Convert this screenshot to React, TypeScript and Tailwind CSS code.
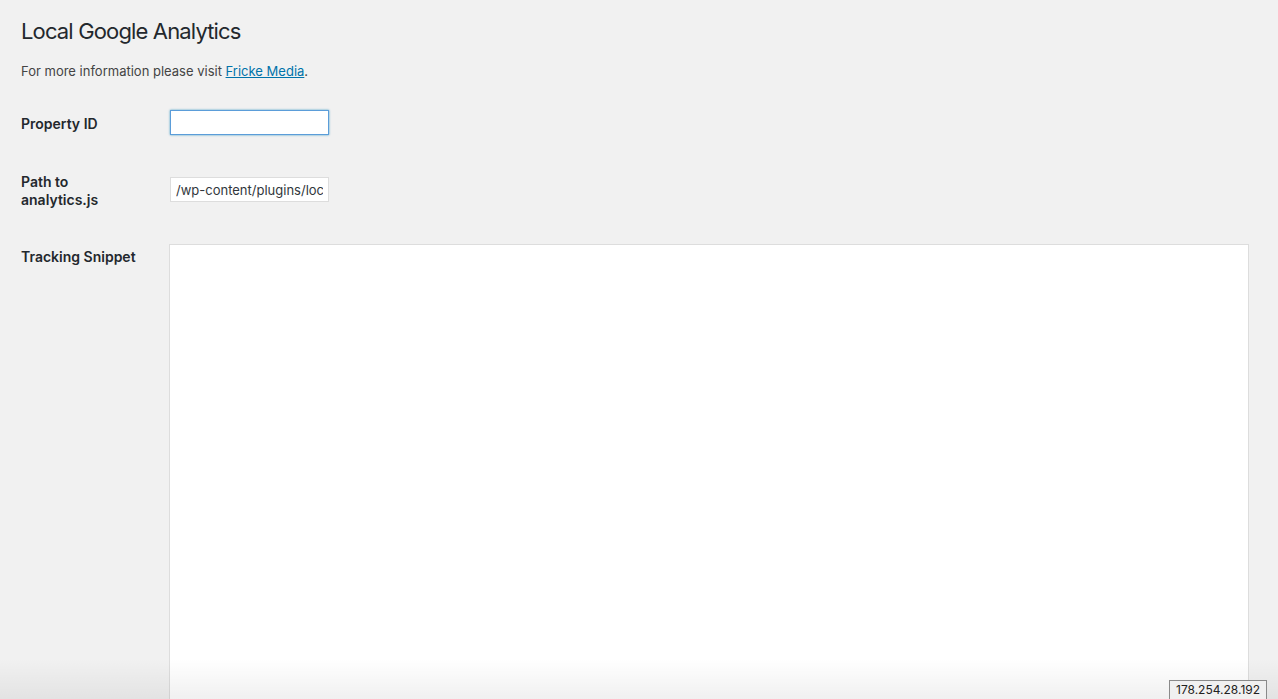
const font = { fontFamily: "Inter, 'Liberation Sans', sans-serif" };

export default function App() {
  return (
    <div
      className="relative h-[699px] w-full overflow-hidden bg-[#f1f1f1] text-[#444]"
      style={font}
    >
      <div className="pl-[21px] pr-[29px]">
        <h1 className="pt-[17px] text-[22px] leading-[29px] font-normal text-[#23282d] tracking-[-0.85px]">
          Local Google Analytics
        </h1>
        <p className="mt-[16px] text-[13px] leading-[19px]">
          For more information please visit{" "}
          <a href="#" className="text-[#0073aa] underline">
            Fricke Media
          </a>
          .
        </p>

        <div className="mt-[29px] grid grid-cols-[149px_1fr] text-[14px] font-semibold leading-[18px] text-[#23282d]">
          {/* Property ID */}
          <div className="pt-[5px]">Property ID</div>
          <div>
            <input
              type="text"
              className="h-[25px] w-[159px] border border-[#5b9dd9] bg-white px-[6px] text-[13px] font-normal shadow-[0_0_2px_rgba(30,140,190,0.8)] outline-none"
            />
          </div>

          {/* Path to analytics.js */}
          <div className="mt-[38px]">
            Path to
            <br />
            analytics.js
          </div>
          <div className="mt-[42px]">
            <input
              type="text"
              readOnly
              defaultValue="/wp-content/plugins/local-google-analytics/analytics.js"
              className="h-[25px] w-[159px] border border-[#ddd] bg-white px-[5px] text-[13px] font-normal text-[#32373c] outline-none"
            />
          </div>

          {/* Tracking Snippet */}
          <div className="mt-[39px]">Tracking Snippet</div>
          <div className="mt-[35px] -ml-[1px]">
            <textarea className="h-[500px] w-[1080px] resize-none border border-[#ddd] bg-white outline-none" />
          </div>
        </div>
      </div>

      {/* bottom fade */}
      <div className="pointer-events-none absolute inset-x-0 bottom-0 h-[40px] bg-gradient-to-b from-transparent to-[rgba(0,0,0,0.06)]" />

      {/* status hover */}
      <div className="absolute bottom-0 left-[1169px] h-[19px] border border-b-0 border-[#8a8a8a] bg-[#f0f0f0] px-[6px] text-[12px] leading-[18px] text-[#222]">
        178.254.28.192
      </div>
    </div>
  );
}
